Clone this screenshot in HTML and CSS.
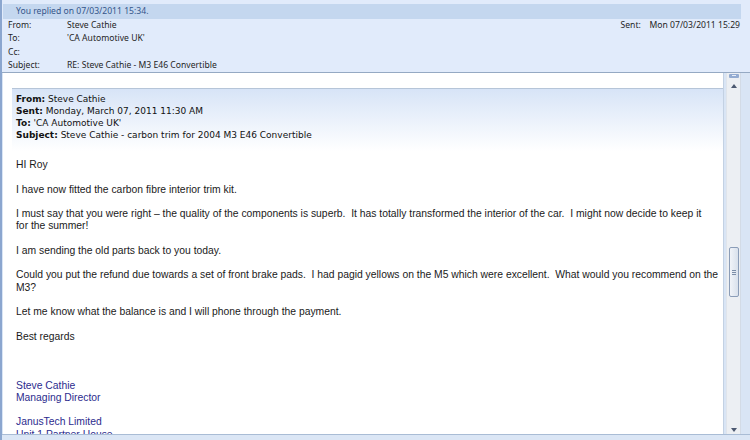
FILE: index.html
```html
<!DOCTYPE html>
<html>
<head>
<meta charset="utf-8">
<link rel="stylesheet" href="styles.css">
</head>
<body>
<div class="window">
  <header class="header">
    <div class="banner">You replied on 07/03/2011 15:34.</div>
    <div class="meta">
      <div class="fields">
        <div class="row"><span class="label">From:</span><span>Steve Cathie</span></div>
        <div class="row"><span class="label">To:</span><span>'CA Automotive UK'</span></div>
        <div class="row"><span class="label">Cc:</span><span></span></div>
        <div class="row"><span class="label">Subject:</span><span>RE: Steve Cathie - M3 E46 Convertible</span></div>
      </div>
      <div class="sent"><span class="sent-label">Sent:</span><span>Mon 07/03/2011 15:29</span></div>
    </div>
  </header>
  <div class="main">
    <div class="pane">
      <div class="quote-head">
        <div><b>From:</b> Steve Cathie</div>
        <div><b>Sent:</b> Monday, March 07, 2011 11:30 AM</div>
        <div><b>To:</b> 'CA Automotive UK'</div>
        <div><b>Subject:</b> Steve Cathie - carbon trim for 2004 M3 E46 Convertible</div>
      </div>
      <div class="message">
        <p>HI Roy</p>
        <p>I have now fitted the carbon fibre interior trim kit.</p>
        <p>I must say that you were right – the quality of the components is superb.&nbsp; It has totally transformed the interior of the car.&nbsp; I might now decide to keep it<br>for the summer!</p>
        <p>I am sending the old parts back to you today.</p>
        <p>Could you put the refund due towards a set of front brake pads.&nbsp; I had pagid yellows on the M5 which were excellent.&nbsp; What would you recommend on the<br>M3?</p>
        <p>Let me know what the balance is and I will phone through the payment.</p>
        <p class="regards">Best regards</p>
        <p class="signature"><span class="sig-line">Steve Cathie</span><br><span class="sig-line">Managing Director</span></p>
        <p class="signature"><span class="sig-line">JanusTech Limited</span><br><span class="sig-line">Unit 1 Partner House</span></p>
      </div>
    </div>
    <div class="scrollbar">
      <div class="collapse"></div>
      <div class="arrow-up"></div>
      <div class="track"><div class="thumb"><span class="grip"></span></div></div>
      <div class="arrow-down"></div>
    </div>
  </div>
  <div class="bottom"></div>
</div>
</body>
</html>
```

FILE: styles.css
```css
html, body {
  margin: 0;
  padding: 0;
}
body {
  width: 750px;
  height: 440px;
  overflow: hidden;
  background: #d9e5f5;
}
.window {
  box-sizing: border-box;
  width: 750px;
  height: 440px;
  display: flex;
  flex-direction: column;
  border-left: 2px solid #8ba6cf;
  background: #d9e5f5;
}
.header {
  background: #e1ebfb;
  padding-top: 4px;
  border-bottom: 1px solid #95a9c3;
  font-family: "Noto Sans", "Open Sans", sans-serif;
  font-size: 8.6px;
  color: #1e1e1e;
}
.banner {
  margin: 0 9px 0 1px;
  height: 15px;
  line-height: 15px;
  padding-left: 13px;
  background: #c4d7ef;
  color: #34558a;
}
.meta {
  display: flex;
  justify-content: space-between;
}
.fields {
  padding-left: 6px;
}
.row {
  display: flex;
  height: 13.25px;
  line-height: 13.25px;
}
.label {
  width: 59px;
}
.sent {
  display: flex;
  height: 13.25px;
  line-height: 13.25px;
  margin-right: 10px;
}
.sent-label {
  width: 29px;
}
.main {
  display: flex;
  height: 361px;
}
.pane {
  flex: 1;
  margin-left: 1px;
  background: #fff;
  border-right: 1px solid #c3d1e3;
  overflow: hidden;
  padding-left: 9px;
}
.quote-head {
  margin-top: 15px;
  border-top: 1px solid #b6c5d8;
  padding: 4px 0 10px 4px;
  background: linear-gradient(#d7e4f7, #ffffff);
  font-family: "DejaVu Sans", Verdana, sans-serif;
  font-size: 9px;
  line-height: 12px;
  color: #111;
}
.quote-head b {
  font-weight: bold;
}
.message {
  margin-top: 8px;
  padding-left: 4px;
  font-family: "Liberation Sans", Arial, sans-serif;
  font-size: 10.35px;
  line-height: 12.25px;
  color: #1a1a1a;
}
.message p {
  margin: 0 0 12.25px;
  white-space: nowrap;
}
.message p.regards {
  margin-bottom: 36.75px;
}
.sig-line {
  color: #2c2c8e;
}
.scrollbar {
  width: 13px;
  margin: 0 9px 0 2px;
  background: #eceff3;
  border-left: 1px solid #dfe4eb;
  border-right: 1px solid #d3dbe6;
  display: flex;
  flex-direction: column;
  align-items: center;
}
.collapse {
  width: 10px;
  height: 4px;
  margin-top: 1px;
  background: #93abd1;
  border-radius: 1px;
  position: relative;
}
.collapse::after {
  content: "";
  position: absolute;
  left: 3px;
  top: 1px;
  width: 4px;
  height: 1px;
  background: #e8eef8;
}
.arrow-up {
  margin-top: 6px;
  width: 0;
  height: 0;
  border-left: 3.5px solid transparent;
  border-right: 3.5px solid transparent;
  border-bottom: 4px solid #4b5870;
}
.track {
  flex: 1;
  width: 100%;
  display: flex;
  flex-direction: column;
  align-items: center;
}
.thumb {
  margin-top: 159px;
  width: 10px;
  height: 50px;
  box-sizing: border-box;
  border: 1px solid #8b9db8;
  border-radius: 2px;
  background: linear-gradient(90deg, #f1f4f9, #d9e1ec);
  display: flex;
  align-items: center;
  justify-content: center;
}
.grip {
  width: 4px;
  height: 5px;
  border-top: 1px solid #7d8ea8;
  border-bottom: 1px solid #7d8ea8;
  box-sizing: border-box;
  position: relative;
}
.grip::after {
  content: "";
  position: absolute;
  left: 0;
  top: 1px;
  width: 4px;
  height: 1px;
  background: #7d8ea8;
}
.arrow-down {
  margin-bottom: 2px;
  width: 0;
  height: 0;
  border-left: 3.5px solid transparent;
  border-right: 3.5px solid transparent;
  border-top: 4px solid #4b5870;
}
.bottom {
  flex: 1;
  border-top: 1px solid #a9bcd5;
  background: #dbe6f5;
}
```
